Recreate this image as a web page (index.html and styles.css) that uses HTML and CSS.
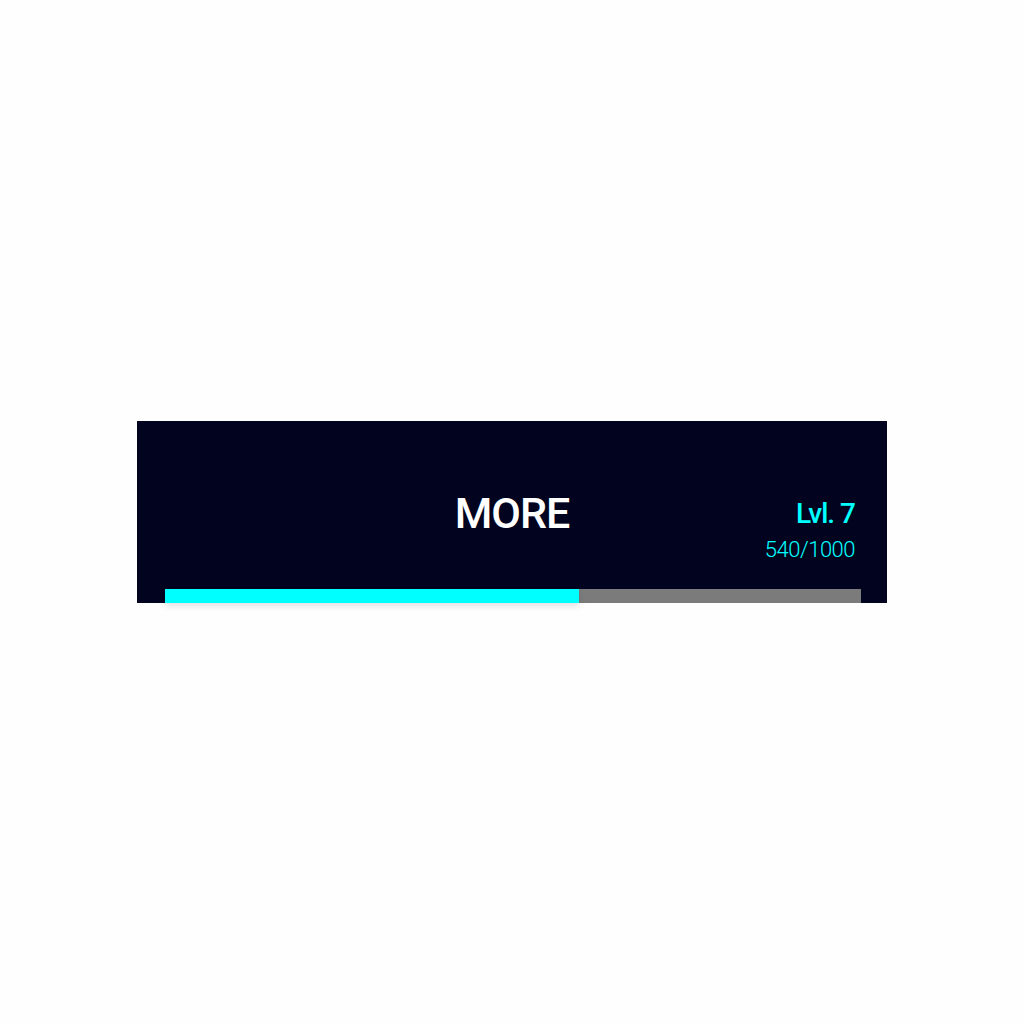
FILE: index.html
```html
<!DOCTYPE html>
<html>
<head>
<meta charset="utf-8">
<link rel="stylesheet" href="styles.css">
</head>
<body>
<div class="page">
  <div class="panel">
    <div class="head">
      <div class="spacer"></div>
      <div class="title">MORE</div>
      <div class="level">
        <div class="lvl">Lvl. 7</div>
        <div class="xp">540/1000</div>
      </div>
    </div>
    <div class="bar"><div class="fill" style="width:414px"></div></div>
  </div>
</div>
</body>
</html>
```

FILE: styles.css
```css
html, body {
  margin: 0;
  padding: 0;
  background: #fefefe;
}
.page {
  width: 1024px;
  height: 1024px;
  display: flex;
  align-items: flex-start;
  justify-content: center;
  padding-top: 421px;
  box-sizing: border-box;
}
.panel {
  width: 750px;
  height: 182px;
  background: #02041f;
  box-sizing: border-box;
  padding-top: 70px;
  display: flex;
  flex-direction: column;
  font-family: Roboto, "Liberation Sans", sans-serif;
}
.head {
  display: grid;
  grid-template-columns: 1fr auto 1fr;
  align-items: start;
  padding: 0 32px;
  height: 98px;
}
.title {
  color: #ffffff;
  font-size: 43px;
  line-height: 43px;
  font-weight: 500;
  letter-spacing: -1px;
  margin-top: 1px;
}
.level {
  justify-self: end;
  text-align: right;
  color: #00ffff;
}
.lvl {
  font-size: 28px;
  line-height: 28px;
  font-weight: 500;
  letter-spacing: -1px;
  margin-top: 9px;
}
.xp {
  font-size: 22px;
  line-height: 22px;
  font-weight: 300;
  letter-spacing: -0.5px;
  margin-top: 11px;
}
.bar {
  margin-left: 28px;
  width: 696px;
  height: 14px;
  background: #7b7b7b;
  display: flex;
}
.fill {
  height: 14px;
  background: #00ffff;
  box-shadow: 0 3px 6px rgba(0,0,0,0.12);
}
```
